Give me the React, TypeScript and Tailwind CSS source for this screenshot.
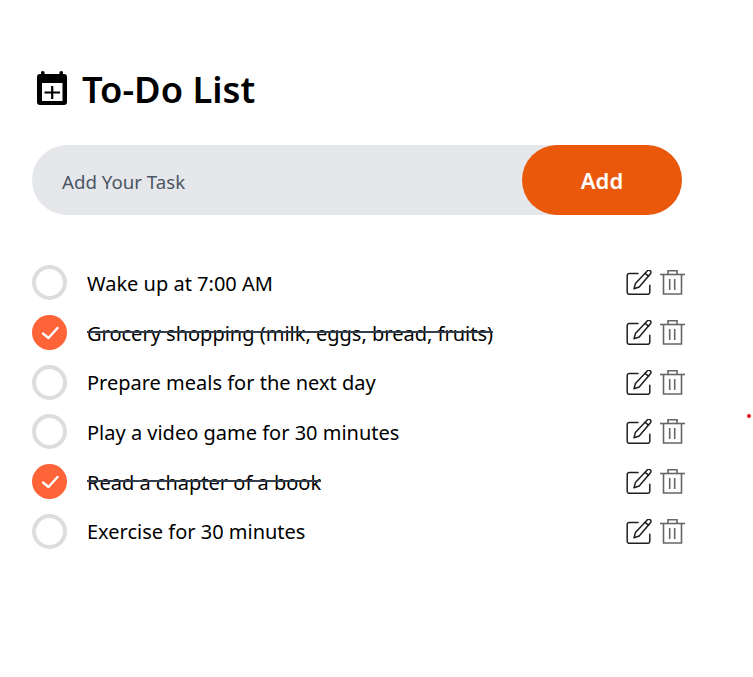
const tasks = [
  { text: "Wake up at 7:00 AM", done: false },
  { text: "Grocery shopping (milk, eggs, bread, fruits)", done: true },
  { text: "Prepare meals for the next day", done: false },
  { text: "Play a video game for 30 minutes", done: false },
  { text: "Read a chapter of a book", done: true },
  { text: "Exercise for 30 minutes", done: false },
];

function CalendarPlus() {
  return (
    <svg width="30" height="34" viewBox="0 0 30 34" className="mt-px shrink-0">
      <rect x="0" y="3" width="30" height="31" rx="3" fill="#000" />
      <rect x="4" y="0" width="3.5" height="6" rx="1.5" fill="#000" />
      <rect x="22.5" y="0" width="3.5" height="6" rx="1.5" fill="#000" />
      <rect x="5" y="12" width="20.5" height="18" fill="#fff" />
      <path d="M15.2 15v13M7.5 21.5h15.5" stroke="#000" strokeWidth="2.2" />
    </svg>
  );
}

function EditIcon() {
  return (
    <svg width="26" height="25" viewBox="0 0 26 25" fill="none" stroke="#1f1f1f" strokeWidth="1.5" strokeLinecap="round" strokeLinejoin="round">
      <path d="M12 3.5H3.2a2 2 0 0 0-2 2v16.8a2 2 0 0 0 2 2h18.6a2 2 0 0 0 2-2v-7" />
      <path d="M21 1.2a2 2 0 0 1 3.6 2.4L13.2 17l-5.2 1.8 1.4-5.2z" />
      <path d="M19 3.4l3.6 2.8" />
    </svg>
  );
}

function TrashIcon() {
  return (
    <svg width="25" height="25" viewBox="0 0 25 25" fill="none" stroke="#666666" strokeWidth="1.6">
      <path d="M0 4.5h25" />
      <path d="M8 4V0.8h9V4" />
      <path d="M3.5 4.5V24h18V4.5" />
      <path d="M9.7 9v11M14.7 9v11" />
    </svg>
  );
}

export default function App() {
  return (
    <div className="relative h-[677px] w-[753px] overflow-hidden bg-white font-['Noto_Sans','Open_Sans',sans-serif] text-black">
      <div className="absolute left-[747px] top-[414px] h-1 w-1 rounded-full bg-[#e8141c]" />
      <div className="pl-8 pt-[70px]">
        <div className="flex items-start gap-[15px] pl-[5px]">
          <CalendarPlus />
          <h1 className="text-[36.3px] font-semibold leading-[38px]">To-Do List</h1>
        </div>
        <div className="mt-[37px] flex h-[70px] w-[650px] items-center rounded-[35px] bg-[#e5e7eb]">
          <div className="flex-1 pl-[30px] pt-1 text-[18.7px] text-[#4b5563]">Add Your Task</div>
          <button className="h-[70px] w-[160px] rounded-[35px] bg-[#ea580c] pt-px text-[22px] font-semibold text-white">Add</button>
        </div>
        <ul className="mt-[43px] w-[653px]">
          {tasks.map((t) => (
            <li key={t.text} className="flex h-[49.7px] items-center">
              {t.done ? (
                <div className="flex h-[35px] w-[35px] items-center justify-center rounded-full bg-[#ff6338]">
                  <svg width="18" height="18" viewBox="0 0 18 18" fill="none" stroke="#fff" strokeWidth="2.4" strokeLinecap="round" strokeLinejoin="round">
                    <path d="M2 9.5L7.5 14L16.5 4" />
                  </svg>
                </div>
              ) : (
                <div className="h-[35px] w-[35px] rounded-full border-4 border-[#dddddd]" />
              )}
              <span className="ml-5 flex-1 pt-0.5 text-[20px]">
                {t.done ? (
                  <span className="relative inline-block">
                    {t.text}
                    <span className="absolute left-0 right-0 top-[12px] h-0.5 bg-[#333f4d]" />
                  </span>
                ) : (
                  t.text
                )}
              </span>
              <div className="flex items-center gap-2">
                <EditIcon />
                <TrashIcon />
              </div>
            </li>
          ))}
        </ul>
      </div>
    </div>
  );
}
